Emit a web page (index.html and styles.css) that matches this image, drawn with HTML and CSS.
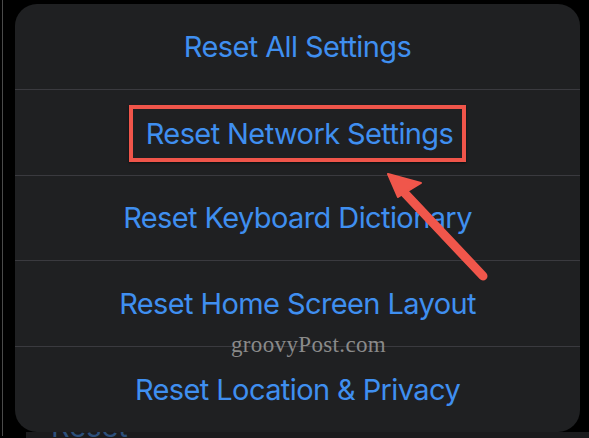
FILE: index.html
```html
<!DOCTYPE html>
<html lang="en">
<head>
  <meta charset="UTF-8" />
  <title>Reset Settings</title>
  <link rel="stylesheet" href="styles.css">
</head>
<body>
  <div class="screen">
    <div class="sheet">
      <div class="sheet-row"><span class="action">Reset All Settings</span></div>
      <div class="sheet-row"><span class="action highlight">Reset Network Settings</span></div>
      <div class="sheet-row"><span class="action">Reset Keyboard Dictionary</span></div>
      <div class="sheet-row"><span class="action">Reset Home Screen Layout</span></div>
      <div class="sheet-row"><span class="action">Reset Location &amp; Privacy</span></div>
    </div>
    <div class="under-strip"><span class="under-text">Reset</span></div>

    <svg class="arrow" width="589" height="438" viewBox="0 0 589 438">
      <line x1="483" y1="276" x2="400" y2="188" stroke="#f0564b" stroke-width="9" stroke-linecap="round" />
      <polygon points="388,174 421,183 398,197" fill="#f0564b" stroke="#f0564b" stroke-width="2" stroke-linejoin="round" />
    </svg>
    <div class="watermark">groovyPost.com</div>
  </div>
</body>
</html>
```

FILE: styles.css
```css
body {
  margin: 0;
  background-color: #000;
  font-family: 'Inter', 'Liberation Sans', sans-serif;
}
.screen {
  position: relative;
  width: 589px;
  height: 438px;
  overflow: hidden;
  background-color: #000;
  border-left: 1px solid #000;
  box-sizing: border-box;
}
.screen::before {
  content: '';
  position: absolute;
  left: 1px;
  top: 0;
  bottom: 2px;
  width: 1px;
  background-color: #4a4a4a;
}
.sheet {
  position: relative;
  z-index: 1;
  margin: 4px 0 0 14px;
  width: 565px;
  height: 428px;
  background-color: #1f2022;
  border-radius: 22px;
  display: flex;
  flex-direction: column;
}
.sheet-row {
  flex: 1;
  display: flex;
  align-items: center;
  justify-content: center;
  border-top: 1px solid #3a3a3f;
}
.sheet-row:first-child {
  border-top: none;
}
.action {
  color: #3f8ff0;
  font-size: 29px;
  letter-spacing: -0.6px;
}
.highlight {
  border: 4px solid #f0554a;
  padding: 0 9px 0 13px;
  line-height: 49px;
  margin-top: 2px;
  box-shadow: 0 1px 2px rgba(0, 0, 0, 0.6);
}
.under-strip {
  margin-left: 25px;
  height: 6px;
  background-color: #1b1b1d;
  overflow: hidden;
}
.under-text {
  display: block;
  margin: -23px 0 0 25px;
  color: #2d4f7a;
  font-size: 29px;
}
.arrow {
  position: absolute;
  left: -1px;
  top: 0;
  z-index: 2;
}
.watermark {
  position: absolute;
  z-index: 2;
  left: 230px;
  top: 332px;
  font-family: 'Liberation Serif', serif;
  font-size: 23px;
  letter-spacing: 0.35px;
  color: #8a8a8a;
}
```
